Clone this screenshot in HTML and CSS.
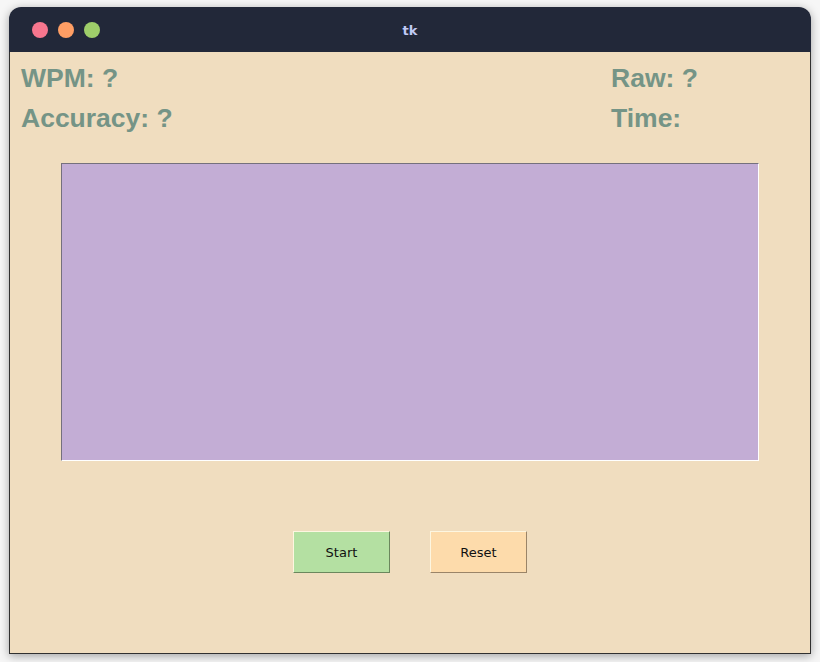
FILE: index.html
```html
<!DOCTYPE html>
<html>
<head>
<meta charset="utf-8">
<title>tk</title>
<link rel="stylesheet" href="styles.css">
</head>
<body>
<div class="window">
  <div class="titlebar">
    <div class="lights">
      <span class="light red"></span>
      <span class="light orange"></span>
      <span class="light green"></span>
    </div>
    <div class="title">tk</div>
  </div>
  <div class="content">
    <div class="stats">
      <div class="stat">WPM: ?</div>
      <div class="stat">Raw: ?</div>
      <div class="stat">Accuracy: ?</div>
      <div class="stat">Time:</div>
    </div>
    <div class="textbox"></div>
    <div class="buttons">
      <button class="btn start">Start</button>
      <button class="btn reset">Reset</button>
    </div>
  </div>
</div>
</body>
</html>
```

FILE: styles.css
```css
html, body {
  margin: 0;
  padding: 0;
  background: #f6f6f6;
  width: 820px;
  height: 662px;
  overflow: hidden;
}

.window {
  margin: 7px 0 0 9px;
  width: 802px;
  height: 647px;
  border-radius: 12px 12px 0 0;
  box-shadow: 0 2px 10px rgba(0, 0, 0, 0.35);
  display: flex;
  flex-direction: column;
  overflow: hidden;
}

.titlebar {
  height: 45px;
  background: #222839;
  display: flex;
  align-items: center;
  position: relative;
  flex: none;
}

.lights {
  display: flex;
  gap: 10px;
  padding-left: 23px;
}

.light {
  width: 16px;
  height: 16px;
  border-radius: 50%;
  display: block;
}

.red { background: #f7768e; }
.orange { background: #ff9e64; }
.green { background: #9ece6a; }

.title {
  position: absolute;
  left: 0;
  right: 0;
  top: 1px;
  line-height: 45px;
  text-align: center;
  color: #c0caf5;
  font-family: "DejaVu Sans", sans-serif;
  font-weight: bold;
  font-size: 13px;
}

.content {
  flex: 1;
  background: #f0ddbf;
  border: 1px solid #303030;
  border-top: none;
  padding-top: 6px;
  display: flex;
  flex-direction: column;
}

.stats {
  display: grid;
  grid-template-columns: 590px 1fr;
  padding-left: 11px;
}

.stat {
  font-family: "Liberation Sans", Arial, sans-serif;
  font-weight: bold;
  font-size: 26.5px;
  line-height: 40px;
  color: #759486;
  white-space: nowrap;
}

.textbox {
  margin: 25px 0 0 51px;
  width: 696px;
  height: 296px;
  background: #c3add5;
  border-top: 1px solid #75707d;
  border-left: 1px solid #75707d;
  border-right: 1px solid #ffffff;
  border-bottom: 1px solid #ffffff;
}

.buttons {
  display: flex;
  gap: 40px;
  margin: 70px 0 0 283px;
}

.btn {
  width: 97px;
  height: 42px;
  margin: 0;
  padding: 0;
  font-family: "DejaVu Sans", sans-serif;
  font-size: 13px;
  color: #111;
  border-style: solid;
  border-width: 1px;
}

.start {
  background: #b4e0a2;
  border-color: #fdf6e0 #6b875d #6b875d #fdf6e0;
}

.reset {
  background: #fddbab;
  border-color: #fdf6e0 #9a8468 #9a8468 #fdf6e0;
}
```
